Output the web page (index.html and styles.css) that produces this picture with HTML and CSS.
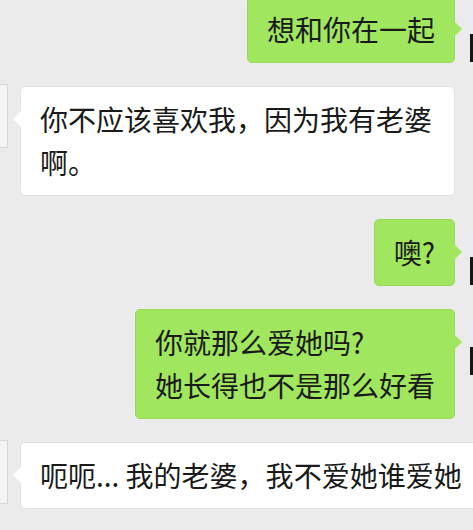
FILE: index.html
```html
<!DOCTYPE html>
<html lang="zh-CN">
<head>
  <meta charset="UTF-8" />
  <meta name="viewport" content="width=device-width, initial-scale=1.0"/>
  <title>聊天记录</title>
  <link rel="stylesheet" href="styles.css">
</head>
<body>

  <div class="chat">
    <div class="row me">
      <div class="bubble">想和你在一起</div>
      <div class="avatar"></div>
    </div>

    <div class="row other">
      <div class="avatar"></div>
      <div class="bubble">你不应该喜欢我，因为我有老婆啊。</div>
    </div>

    <div class="row me">
      <div class="bubble">噢?</div>
      <div class="avatar"></div>
    </div>

    <div class="row me">
      <div class="bubble">你就那么爱她吗?<br>她长得也不是那么好看</div>
      <div class="avatar"></div>
    </div>

    <div class="row other">
      <div class="avatar"></div>
      <div class="bubble nowrap">呃呃... 我的老婆，我不爱她谁爱她</div>
    </div>
  </div>

</body>
</html>
```

FILE: styles.css
```css
html, body {
  overflow: hidden;
}
body {
  margin: 0;
  background: #ebebeb;
  font-family: "Noto Sans CJK SC", "Noto Sans", sans-serif;
  color: #1a1a1a;
}
.chat {
  display: flex;
  flex-direction: column;
  gap: 23px;
  margin: -4px -57px 0 -52px;
}
.row {
  display: flex;
  align-items: flex-start;
}
.row.me {
  justify-content: flex-end;
  gap: 15px;
}
.row.other {
  gap: 12px;
}
.bubble {
  position: relative;
  box-sizing: border-box;
  max-width: 435px;
  padding: 11px 19px;
  border-radius: 5px;
  font-size: 28px;
  line-height: 43px;
}
.bubble::before {
  content: "";
  position: absolute;
  top: 24px;
  border-top: 8px solid transparent;
  border-bottom: 8px solid transparent;
}
.me .bubble {
  background: #a0e65e;
  border: 1px solid #97d958;
}
.me .bubble::before {
  right: -8px;
  border-left: 8px solid #a0e65e;
}
.other .bubble {
  background: #ffffff;
  border: 1px solid #e2e2e2;
}
.other .bubble::before {
  left: -8px;
  border-right: 8px solid #ffffff;
}
.nowrap {
  white-space: nowrap;
  max-width: none;
}
.avatar {
  flex: none;
  width: 60px;
}
.me .avatar {
  height: 56px;
  margin-top: 10px;
  background: linear-gradient(#e9eaf3 0, #e9eaf3 50%, #161616 50%, #161616 100%);
}
.other .avatar {
  height: 64px;
  margin-top: -2px;
  box-sizing: border-box;
  background: #f4f4f4;
  border: 1px solid #d6d6d6;
}
```
